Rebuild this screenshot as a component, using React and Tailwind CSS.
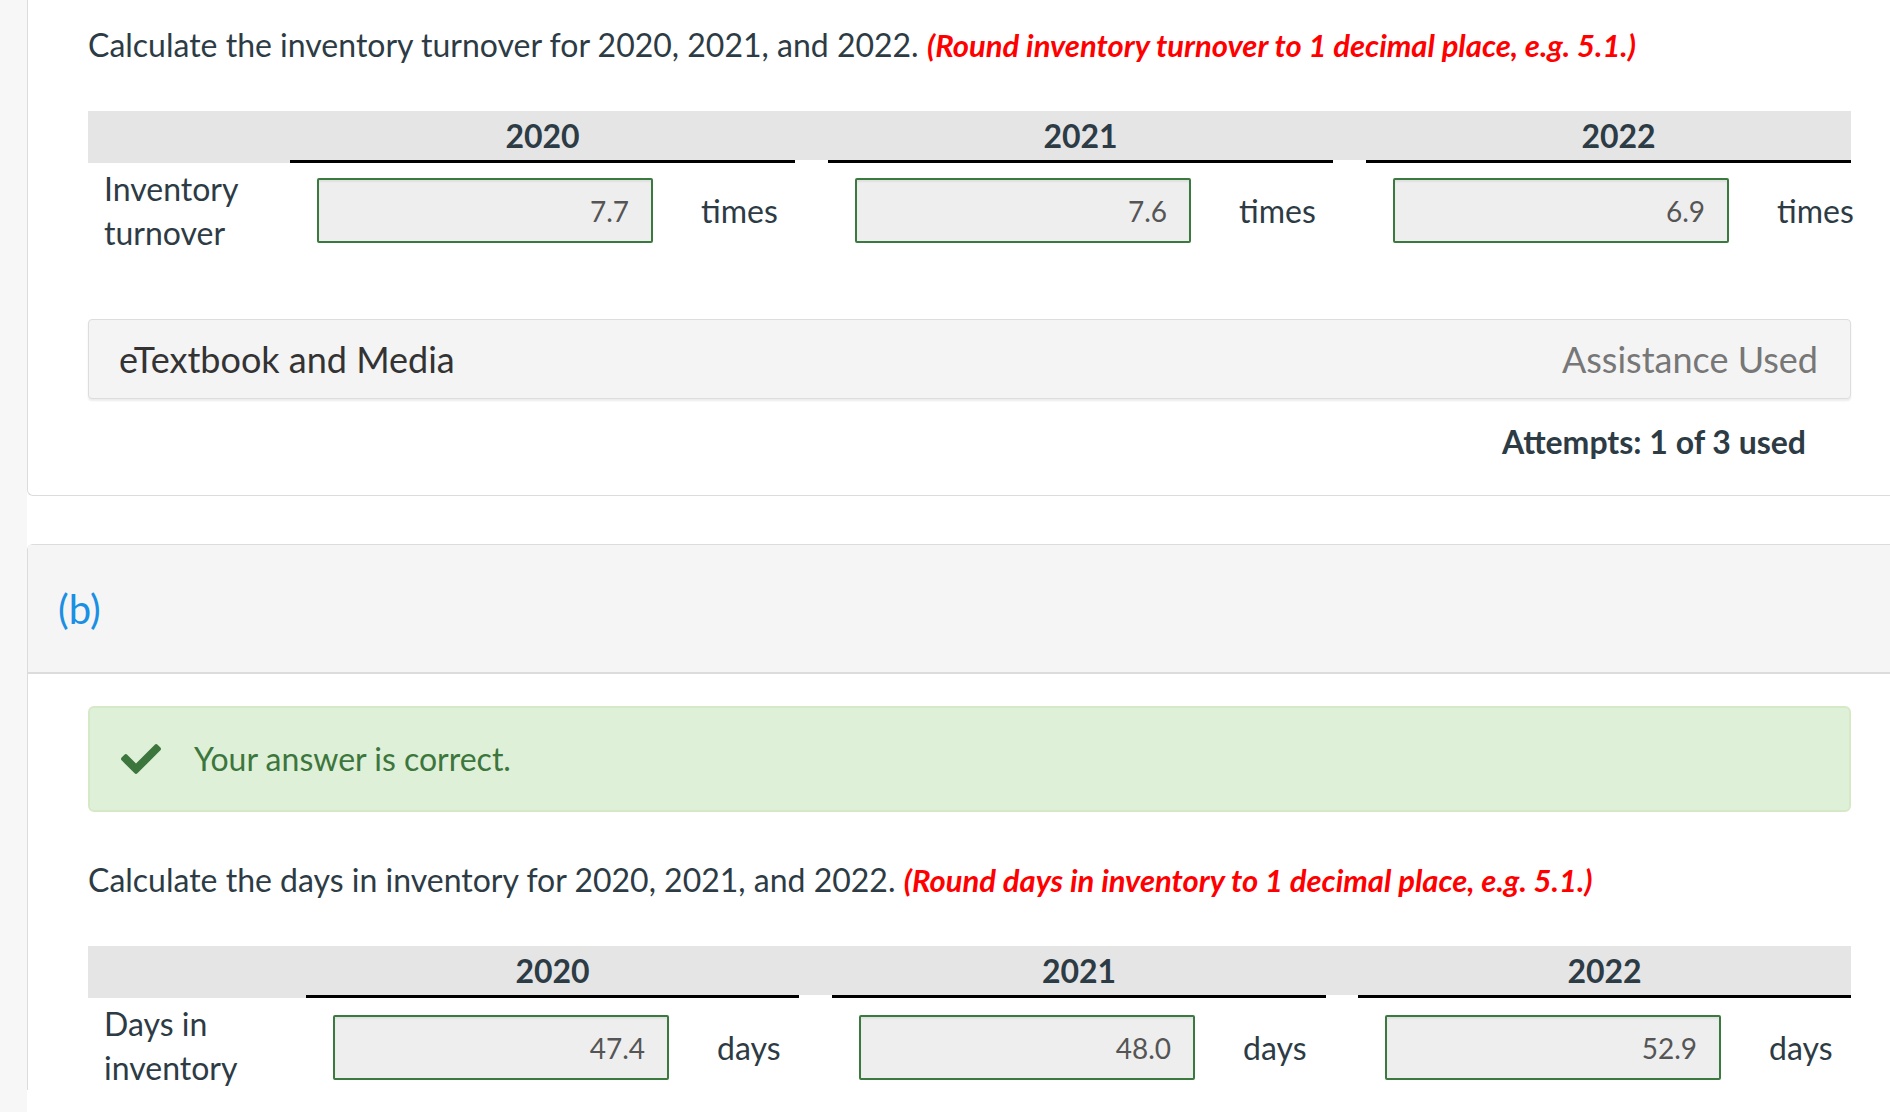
import { FaCheck } from 'react-icons/fa'

const ink = 'text-[#2d3b45]'

function AnswerTable({ label, unit, cols, values, rowPad, lastWide }) {
  return (
    <div className="w-full">
      {/* Header band */}
      <div className={`grid ${cols} bg-[#e5e5e5] h-[52px]`}>
        <div></div>
        {['2020', null, '2021', null, '2022'].map((y, i) =>
          y ? (
            <div key={i} className="flex items-center justify-start border-b-[3px] border-black">
              <span className={`${i === 4 && lastWide ? 'w-[505px]' : 'w-full'} shrink-0 text-center text-[32px] font-bold ${ink} leading-none`}>{y}</span>
            </div>
          ) : (
            <div key={i} className="bg-white mt-auto h-[3px]"></div>
          )
        )}
      </div>
      {/* Answer row */}
      <div className={`grid ${cols}`}>
        <div className={`pl-[16px] pt-[4px] text-[32px] leading-[44px] ${ink}`}>
          {label[0]}
          <br />
          {label[1]}
        </div>
        {values.map((v, i) => (
          <div key={i} className={`${i === 1 ? 'col-start-4' : i === 2 ? 'col-start-6' : ''} flex items-start ${rowPad}`}>
            <div className="ml-[27px] w-[336px] shrink-0 h-[65px] border-2 border-[#3b7a3f] bg-[#eeeeee] rounded-[2px] flex items-center justify-end pr-[22px] shadow-[inset_0_2px_2px_rgba(0,0,0,0.06)]">
              <span className="text-[28px] text-[#555]">{v}</span>
            </div>
            <span className={`ml-[48px] shrink-0 h-[65px] flex items-center text-[32px] ${ink}`}>{unit}</span>
          </div>
        ))}
      </div>
    </div>
  )
}

export default function App() {
  return (
    <div className="min-h-screen bg-white flex overflow-hidden" style={{ fontFamily: 'Lato, "Noto Sans", sans-serif' }}>
      <div className="w-[27px] shrink-0 bg-[#f7f7f7]"></div>
      <div className="flex-1 min-w-0">
        {/* Part (a) card */}
        <div className="border-l border-b border-[#dcdcdc] rounded-bl-[6px] pl-[60px] pr-[39px] pt-[23px] pb-[31px]">
          <p className={`text-[32px] leading-[44px] whitespace-nowrap ${ink}`}>
            Calculate the inventory turnover for 2020, 2021, and 2022.{' '}
            <span className="text-[31px] font-bold italic text-[#ff0000]">
              (Round inventory turnover to 1 decimal place, e.g. 5.1.)
            </span>
          </p>
          <div className="mt-[44px]">
            <AnswerTable
              label={['Inventory', 'turnover']}
              unit="times"
              cols="grid-cols-[202px_505px_33px_505px_33px_485px]"
              values={['7.7', '7.6', '6.9']}
              rowPad="pt-[15px]"
              lastWide
            />
          </div>
          <div className="mt-[64px] h-[80px] bg-[#f4f4f4] border border-[#dddddd] rounded-[4px] shadow-[0_2px_2px_rgba(0,0,0,0.08)] flex items-center justify-between pl-[30px] pr-[32px]">
            <span className="text-[36px] text-[#333]">eTextbook and Media</span>
            <span className="text-[36px] text-[#777]">Assistance Used</span>
          </div>
          <div className="flex justify-end pr-[45px] mt-[21px]">
            <span className={`text-[32px] font-bold ${ink} leading-[44px]`}>Attempts: 1 of 3 used</span>
          </div>
        </div>

        {/* Part (b) card */}
        <div className="mt-[48px] border-l border-t border-[#dcdcdc] rounded-tl-[6px]">
          <div className="h-[129px] bg-[#f5f5f5] border-b-2 border-[#dcdcdc] flex items-center pl-[30px]">
            <span className="text-[40px] text-[#1a8fe3]">(b)</span>
          </div>
          <div className="pl-[60px] pr-[39px] pt-[32px]">
            <div className="h-[106px] bg-[#dff0d8] border-2 border-[#d6e9c6] rounded-[6px] flex items-center pl-[31px]">
              <FaCheck className="w-[40px] h-[40px] text-[#3c763d]" />
              <span className="ml-[33px] text-[32px] text-[#3c763d]">Your answer is correct.</span>
            </div>
            <p className={`mt-[46px] text-[32px] leading-[44px] whitespace-nowrap ${ink}`}>
              Calculate the days in inventory for 2020, 2021, and 2022.{' '}
              <span className="text-[31px] font-bold italic text-[#ff0000]">
                (Round days in inventory to 1 decimal place, e.g. 5.1.)
              </span>
            </p>
            <div className="mt-[44px]">
              <AnswerTable
                label={['Days in', 'inventory']}
                unit="days"
                cols="grid-cols-[218px_493px_33px_494px_32px_493px]"
                values={['47.4', '48.0', '52.9']}
                rowPad="pt-[17px]"
              />
            </div>
          </div>
        </div>
      </div>
    </div>
  )
}
